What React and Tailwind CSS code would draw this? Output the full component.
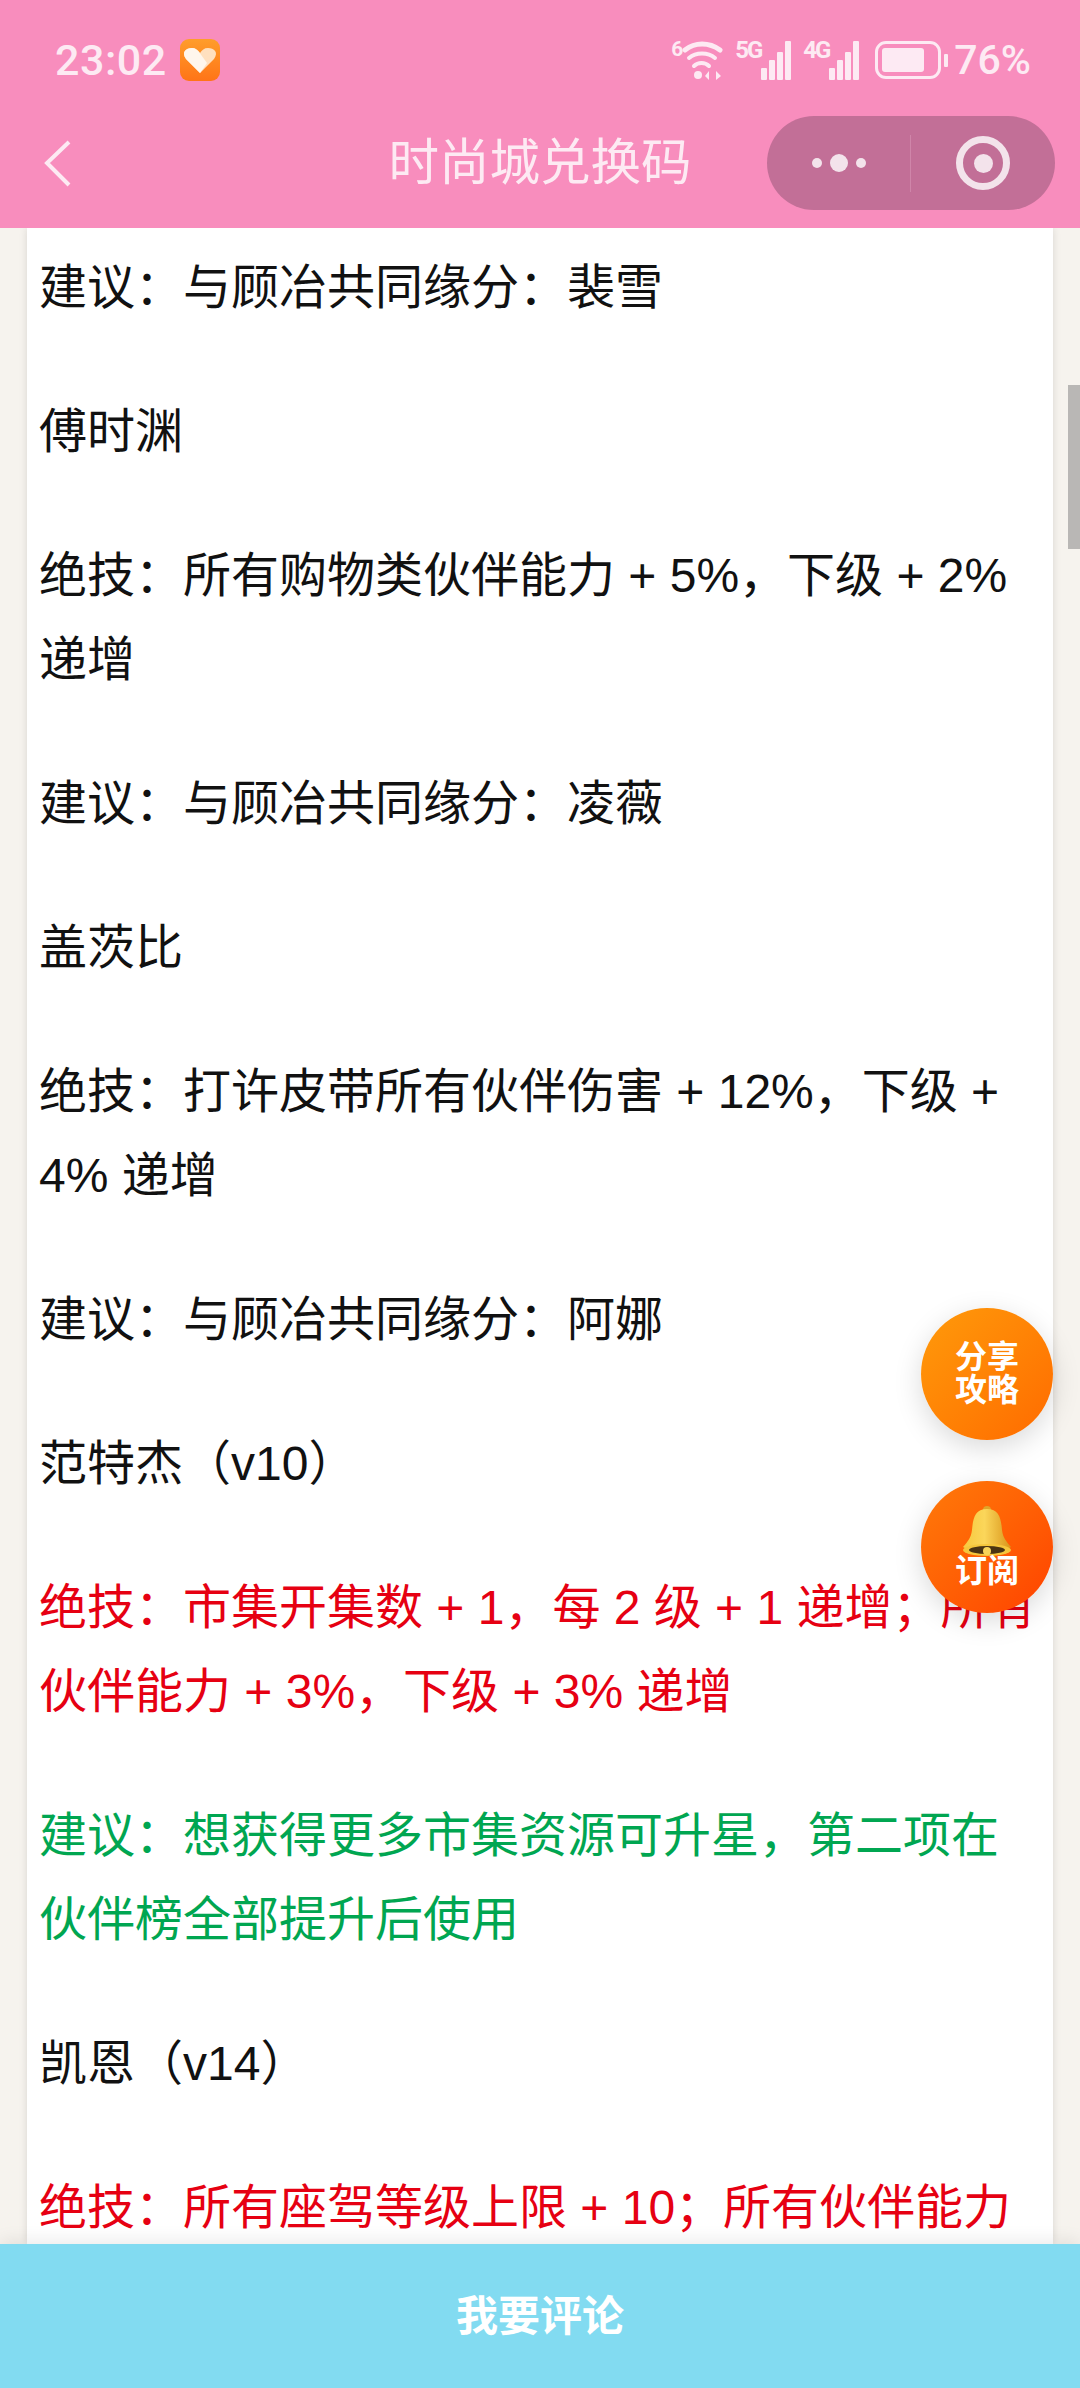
import React from 'react';

const paragraphs = [
  { text: '建议：与顾冶共同缘分：裴雪' },
  { text: '傅时渊' },
  { text: '绝技：所有购物类伙伴能力 + 5%，下级 + 2% 递增' },
  { text: '建议：与顾冶共同缘分：凌薇' },
  { text: '盖茨比' },
  { text: '绝技：打许皮带所有伙伴伤害 + 12%，下级 + 4% 递增' },
  { text: '建议：与顾冶共同缘分：阿娜' },
  { text: '范特杰（v10）' },
  { text: '绝技：市集开集数 + 1，每 2 级 + 1 递增；所有伙伴能力 + 3%，下级 + 3% 递增', color: 'text-[#e60012]' },
  { text: '建议：想获得更多市集资源可升星，第二项在伙伴榜全部提升后使用', color: 'text-[#00a651]' },
  { text: '凯恩（v14）' },
  { text: '绝技：所有座驾等级上限 + 10；所有伙伴能力 + 5%，下级 + 2% 递增', color: 'text-[#e60012]' },
];

const SignalIcon = ({ label }) => (
  <div className="relative w-[56px] h-[39px]">
    <span className="absolute left-0 top-[-4px] text-[24px] font-bold leading-[26px] tracking-[-2px]">{label}</span>
    <div className="absolute right-0 bottom-0 flex items-end gap-[2px]">
      <div className="w-[6px] h-[12px] bg-[#fdeaf3] rounded-[1px]" />
      <div className="w-[6px] h-[20px] bg-[#fdeaf3] rounded-[1px]" />
      <div className="w-[6px] h-[28px] bg-[#fdeaf3] rounded-[1px]" />
      <div className="w-[6px] h-[39px] bg-[#fdeaf3] rounded-[1px]" />
    </div>
  </div>
);

const WifiIcon = () => (
  <div className="relative w-[52px] h-[41px]">
    <span className="absolute left-0 top-[-3px] text-[21px] font-bold leading-[24px]">6</span>
    <svg width="52" height="41" viewBox="0 0 52 41" fill="none" stroke="#fdeaf3" strokeLinecap="round">
      <path d="M14 10 C24 2 38 2 49 10" strokeWidth="5" />
      <path d="M18 18 C25 12 37 12 44 18" strokeWidth="4" />
      <path d="M23 26 C27 22 34 22 38 26" strokeWidth="4" />
      <circle cx="27" cy="35" r="4" fill="#fdeaf3" stroke="none" />
      <path d="M38 40 L38 31 L34 36 Z M45 31 L45 40 L50 36 Z" fill="#fdeaf3" stroke="none" />
    </svg>
  </div>
);

const StatusBar = () => (
  <div className="h-[116px] pl-[55px] pr-[49px] pt-[38px] flex justify-between items-start text-[#fdeaf3]">
    <div className="flex items-center gap-[12px] h-[44px]">
      <span className="text-[43px] font-medium leading-[44px] tracking-[0.5px]">23:02</span>
      <svg width="42" height="42" viewBox="0 0 40 42">
        <defs>
          <linearGradient id="appBg" x1="0" y1="0" x2="0" y2="1">
            <stop offset="0" stopColor="#ff9d2b" />
            <stop offset="1" stopColor="#ff7417" />
          </linearGradient>
        </defs>
        <rect width="40" height="42" rx="9" fill="url(#appBg)" />
        <path d="M20 34 L6 20 C1 13 6 9 12 9 C16 9 18 11 20 14 C22 11 24 9 28 9 C34 9 39 13 34 20 Z" fill="#ffe0bf" />
        <path d="M20 34 L6 20 C1 13 6 9 12 9 C15 9 17 11 19 13 L27 24 Z" fill="#fff6ec" />
      </svg>
    </div>
    <div className="flex items-center gap-[12px] h-[44px]">
      <WifiIcon />
      <SignalIcon label="5G" />
      <SignalIcon label="4G" />
      <div className="flex items-center ml-[4px]">
        <div className="w-[66px] h-[38px] border-[3px] border-[#fdeaf3] rounded-[11px] p-[4px]">
          <div className="h-full w-[42px] bg-[#fdeaf3] rounded-[3px]" />
        </div>
        <div className="w-[4px] h-[13px] bg-[#fdeaf3] ml-[3px] rounded-[1px]" />
      </div>
      <span className="text-[41px] font-medium leading-[44px] ml-[-6px]">76%</span>
    </div>
  </div>
);

const NavBar = () => (
  <div className="relative h-[112px] flex items-start justify-center">
    <svg className="absolute left-[42px] top-[22px]" width="32" height="50" viewBox="0 0 32 50" fill="none" stroke="#fdeaf3" strokeWidth="4">
      <path d="M27 4 L5 25 L27 47" />
    </svg>
    <h1 className="text-[50.5px] leading-[94px] font-normal text-[#fdeaf3]">时尚城兑换码</h1>
    <div className="absolute left-[767px] top-0 w-[288px] h-[94px] rounded-full bg-[#c26f97] flex items-center">
      <div className="w-[144px] h-[57px] border-r border-[#cf85a9] flex items-center justify-center gap-[8px]">
        <div className="w-[10px] h-[10px] rounded-full bg-[#f3e3eb]" />
        <div className="w-[18px] h-[18px] rounded-full bg-[#f3e3eb]" />
        <div className="w-[10px] h-[10px] rounded-full bg-[#f3e3eb]" />
      </div>
      <div className="flex-1 flex justify-center">
        <div className="w-[54px] h-[54px] rounded-full border-[7px] border-[#f3e3eb] flex items-center justify-center">
          <div className="w-[19px] h-[19px] rounded-full bg-[#f3e3eb]" />
        </div>
      </div>
    </div>
  </div>
);

const Bell = () => (
  <svg width="52" height="52" viewBox="0 0 52 52">
    <defs>
      <linearGradient id="bellBody" x1="0" y1="0" x2="1" y2="0">
        <stop offset="0" stopColor="#f7c93e" />
        <stop offset="0.45" stopColor="#fbd65a" />
        <stop offset="1" stopColor="#d9951a" />
      </linearGradient>
    </defs>
    <circle cx="26" cy="4" r="4" fill="#e0a52a" />
    <path d="M26 3 C14 3 12 12 11 24 C10 32 7 35 2 41 C10 46 42 46 50 41 C45 35 42 32 41 24 C40 12 38 3 26 3 Z" fill="url(#bellBody)" />
    <ellipse cx="26" cy="44" rx="24" ry="6" fill="#f5c63c" />
    <ellipse cx="26" cy="44" rx="18" ry="4" fill="#4a3413" />
    <circle cx="26" cy="45" r="4" fill="#f7d45a" />
  </svg>
);

const App = () => {
  return (
    <div className="relative w-[1080px] h-[2388px] overflow-hidden flex flex-col bg-[#f6f3ee]" style={{ fontFamily: '"Liberation Sans", "Noto Sans CJK SC", sans-serif' }}>
      <header className="bg-[#f88dbd] h-[228px] shrink-0" style={{ fontFamily: 'Roboto, "Noto Sans CJK SC", sans-serif' }}>
        <StatusBar />
        <NavBar />
      </header>

      <main className="flex-1 min-h-0 overflow-hidden pl-[27px] pr-[27px]">
        <article className="bg-white h-full overflow-hidden pt-[18px] pl-[12px] pr-[13px] shadow-[0_0_8px_rgba(0,0,0,0.12)]">
          {paragraphs.map((p, i) => (
            <p key={i} className={`text-[48px] leading-[84px] mb-[60px] ${p.color || 'text-[#111111]'}`}>{p.text}</p>
          ))}
        </article>
      </main>

      <button className="h-[144px] shrink-0 bg-[#82dbf1] text-white text-[42px] font-bold shadow-[0_-4px_16px_rgba(0,0,0,0.08)] z-10">我要评论</button>

      {/* scrollbar */}
      <div className="absolute right-0 top-[385px] w-[12px] h-[164px] bg-[#b9b7b5]" />

      {/* floating buttons */}
      <div className="absolute left-[921px] top-[1308px] w-[132px] h-[132px] rounded-full bg-gradient-to-br from-[#ff9a0b] to-[#ff6a00] shadow-[0_8px_28px_rgba(0,0,0,0.15)] flex flex-col items-center justify-center text-white text-[32px] font-bold leading-[33px]">
        <span>分享</span>
        <span>攻略</span>
      </div>
      <div className="absolute left-[921px] top-[1481px] w-[132px] h-[132px] rounded-full bg-gradient-to-br from-[#ff7a0a] to-[#ff4000] shadow-[0_8px_28px_rgba(0,0,0,0.15)] flex flex-col items-center pt-[25px] text-white text-[32px] font-bold leading-[34px]">
        <Bell />
        <span className="mt-[-4px]">订阅</span>
      </div>
    </div>
  );
};

export default App;
